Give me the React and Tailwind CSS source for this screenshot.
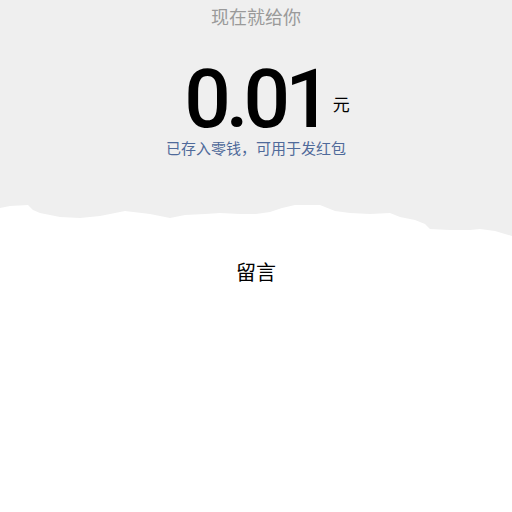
export default function App() {
  return (
    <div
      className="w-[512px] h-[512px] bg-white overflow-hidden"
      style={{ fontFamily: "Roboto, 'Noto Sans CJK SC', sans-serif" }}
    >
      {/* Gray header */}
      <div className="bg-[#efefef] h-[200px] flex flex-col items-center">
        <div className="mt-[3px] text-[18px] leading-[26px] text-[#9a9a9a] font-['Noto_Sans_CJK_SC',sans-serif]">
          现在就给你
        </div>
        <div className="mt-[40px] pl-[22px] flex items-end">
          <span className="text-[82px] leading-[60px] text-black font-medium tracking-[-5px] font-['Roboto',sans-serif]">
            0.01
          </span>
          <span className="ml-[6px] mb-[15px] text-[17px] leading-[20px] text-black font-['Noto_Sans_CJK_SC',sans-serif]">
            元
          </span>
        </div>
        <div className="mt-[8px] text-[15px] leading-[22px] text-[#4f6a9a] font-['Noto_Sans_CJK_SC',sans-serif]">
          已存入零钱，可用于发红包
        </div>
      </div>

      {/* Torn paper edge */}
      <svg width="512" height="40" viewBox="0 0 512 40" className="block">
        <path
          fill="#efefef"
          d="M0,0 L512,0 L512,36 L495,31 L480,29 L470,30 L450,30 L430,29 L425,24 L415,20 L400,17 L390,13 L370,14 L350,13 L335,11 L320,5 L295,5 L282,8 L270,12 L256,14 L240,14 L220,13 L205,14 L185,15 L170,18 L150,14 L125,11 L115,13 L100,16 L80,18 L60,17 L40,13 L33,10 L28,5 L10,6 L0,8 Z"
        />
      </svg>

      <div className="flex justify-center mt-[18px]">
        <span className="text-[20px] leading-[28px] text-black font-['Noto_Sans_CJK_SC',sans-serif]">
          留言
        </span>
      </div>
    </div>
  );
}
